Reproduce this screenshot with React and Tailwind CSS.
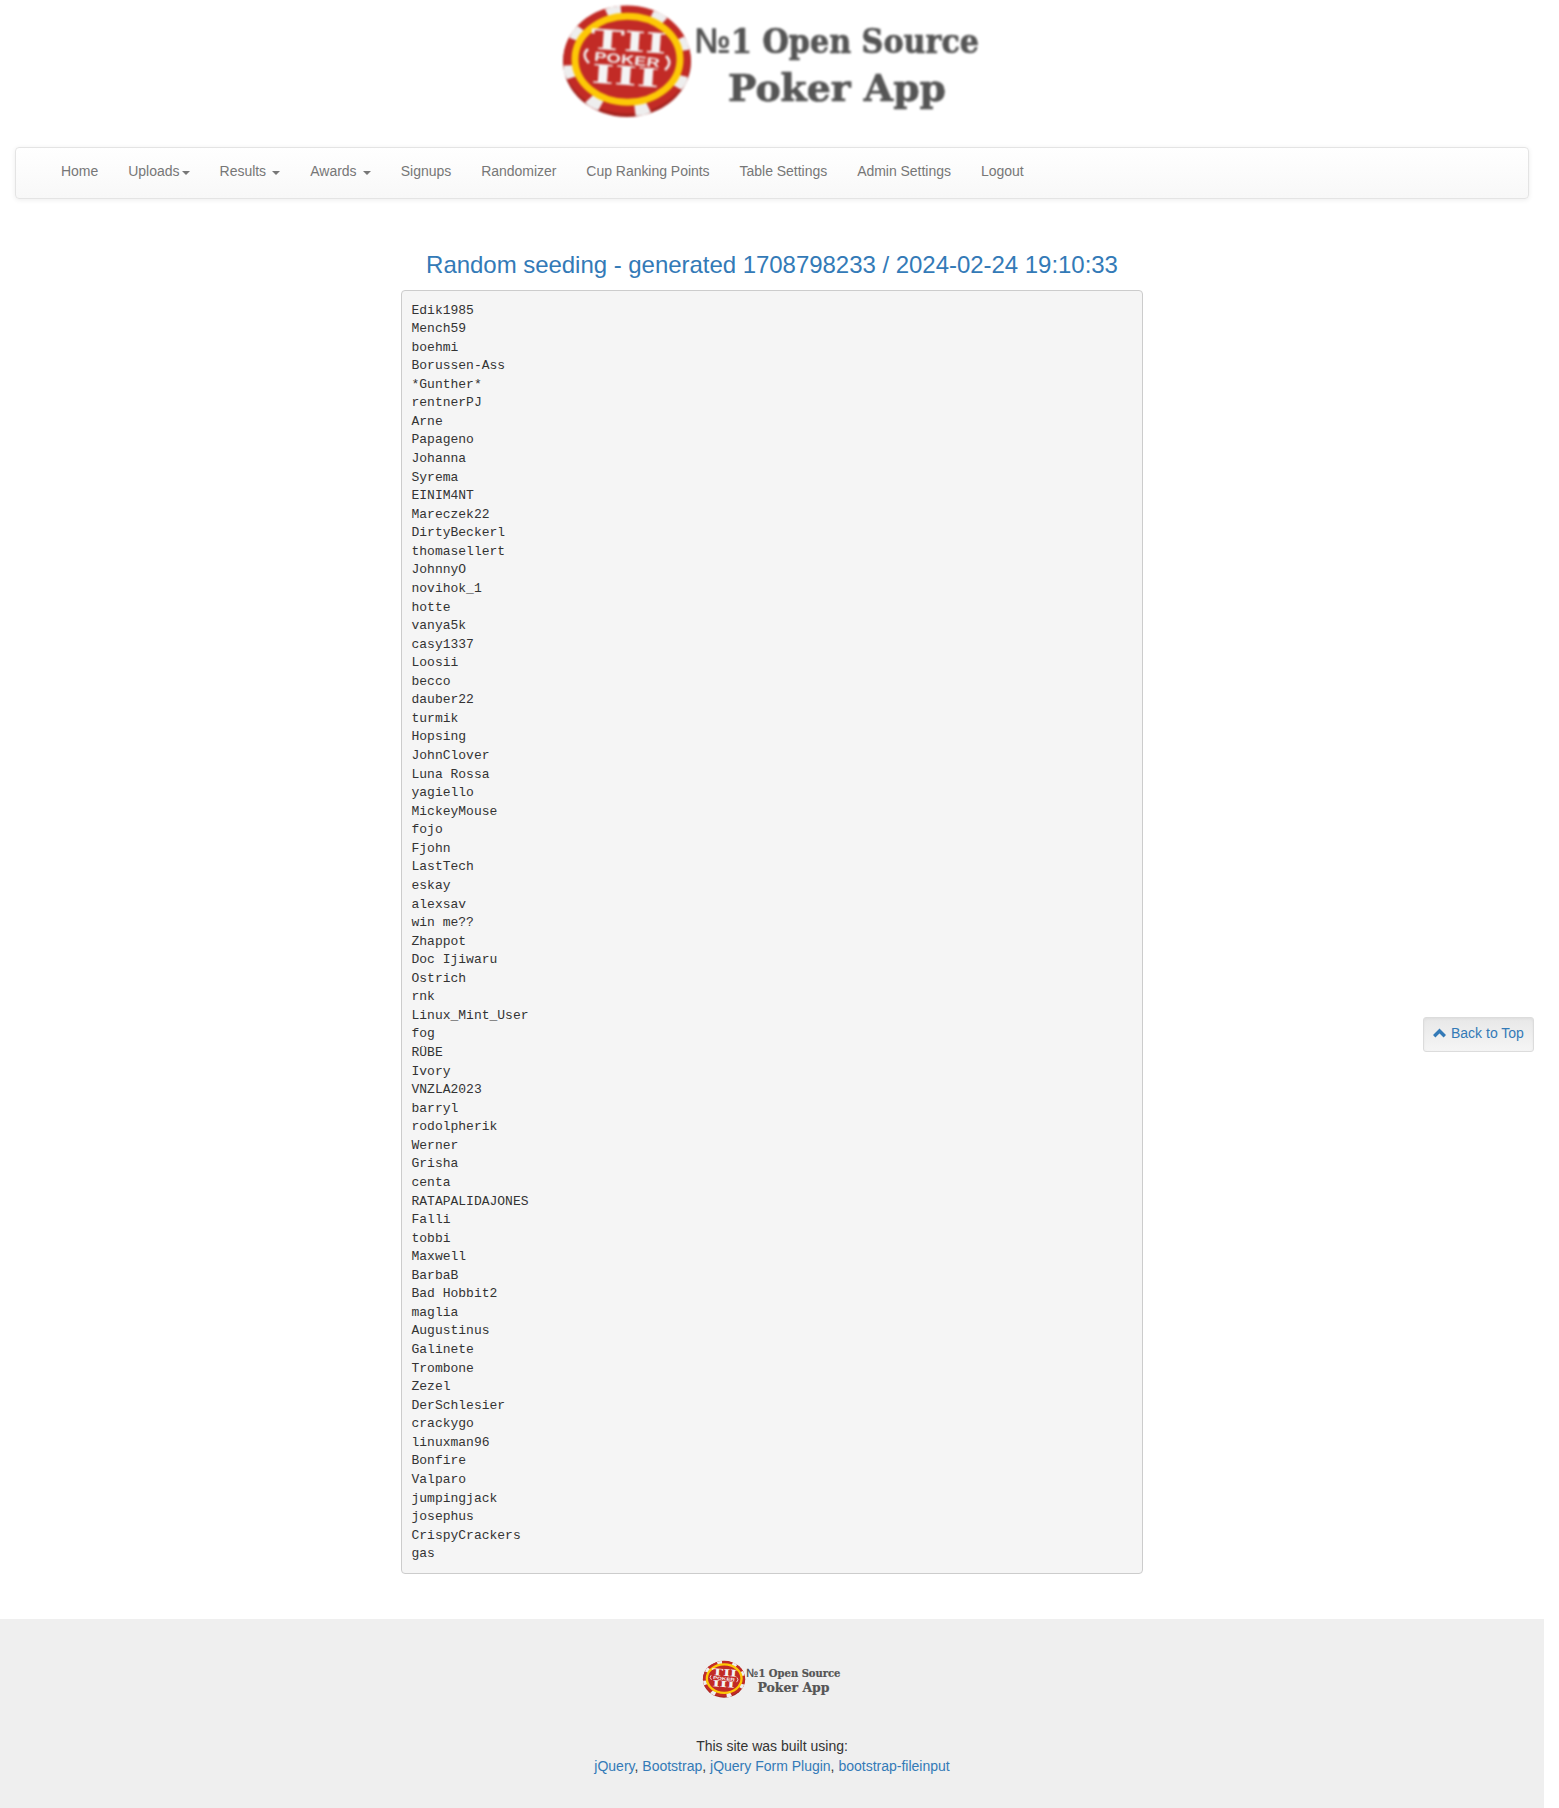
const names = `Edik1985
Mench59
boehmi
Borussen-Ass
*Gunther*
rentnerPJ
Arne
Papageno
Johanna
Syrema
EINIM4NT
Mareczek22
DirtyBeckerl
thomasellert
JohnnyO
novihok_1
hotte
vanya5k
casy1337
Loosii
becco
dauber22
turmik
Hopsing
JohnClover
Luna Rossa
yagiello
MickeyMouse
fojo
Fjohn
LastTech
eskay
alexsav
win me??
Zhappot
Doc Ijiwaru
Ostrich
rnk
Linux_Mint_User
fog
RÜBE
Ivory
VNZLA2023
barryl
rodolpherik
Werner
Grisha
centa
RATAPALIDAJONES
Falli
tobbi
Maxwell
BarbaB
Bad Hobbit2
maglia
Augustinus
Galinete
Trombone
Zezel
DerSchlesier
crackygo
linuxman96
Bonfire
Valparo
jumpingjack
josephus
CrispyCrackers
gas`;

const navItems = [
  { label: "Home" },
  { label: "Uploads", caret: "tight" },
  { label: "Results", caret: "spaced" },
  { label: "Awards", caret: "spaced" },
  { label: "Signups" },
  { label: "Randomizer" },
  { label: "Cup Ranking Points" },
  { label: "Table Settings" },
  { label: "Admin Settings" },
  { label: "Logout" },
];

const credits = ["jQuery", "Bootstrap", "jQuery Form Plugin", "bootstrap-fileinput"];

// Angles, in degrees clockwise from the top, of the white edge spots on the chip.
const spots = [-13, 32, 71, 114, 165, 214, 258, 302];

function Logo({ className }) {
  return (
    <svg viewBox="0 0 444 130" className={className} overflow="visible">
      <ellipse cx="77" cy="61.5" rx="64" ry="55.5" fill="#a3231f" />
      <ellipse cx="77" cy="59.5" rx="63.5" ry="54" fill="#c22b26" />
      <g transform="translate(77 61) scale(1 0.87)">
        {spots.map((a) => (
          <path key={a} d="M-8 -63 Q0 -65.5 8 -63 L6 -50 L-6 -50 Z" fill="#eeeeee" transform={`rotate(${a})`} />
        ))}
      </g>
      <ellipse cx="77.5" cy="59.2" rx="52.5" ry="43" fill="#c22b26" stroke="#fdc806" strokeWidth="7" />
      <g fill="#f4f4f4" fontFamily="DejaVu Serif" fontWeight="bold">
        <text x="40" y="51" fontSize="28" textLength="76" lengthAdjust="spacingAndGlyphs" transform="rotate(4 77 50)">TII</text>
        <text x="41" y="85" fontSize="26" textLength="68" lengthAdjust="spacingAndGlyphs" transform="rotate(4 77 85)">III</text>
      </g>
      <text x="44" y="64" fontFamily="Liberation Sans" fontWeight="bold" fontSize="13" fill="#f4f4f4" stroke="#c22b26" strokeWidth="3" paintOrder="stroke" textLength="66" lengthAdjust="spacingAndGlyphs" transform="rotate(6 77 60)">POKER</text>
      <path d="M38 49 q-7 6 1 14 M116 56 q7 7 -1 14" fill="none" stroke="#f4f4f4" strokeWidth="2.5" />
      <g fill="#555555" fontWeight="bold">
        <text x="144.5" y="53" fontFamily="Liberation Sans" fontSize="36" textLength="36" lengthAdjust="spacingAndGlyphs">№</text>
        <g fontFamily="DejaVu Serif" stroke="#555555" strokeWidth="0.7">
          <text x="181" y="53" fontSize="34" textLength="248" lengthAdjust="spacingAndGlyphs">1 Open Source</text>
          <text x="178" y="101" fontSize="38" textLength="218" lengthAdjust="spacingAndGlyphs">Poker App</text>
        </g>
      </g>
    </svg>
  );
}

export default function App() {
  return (
    <div className="relative flex h-[1808px] w-[1544px] flex-col font-['Helvetica_Neue',Helvetica,'Liberation_Sans',sans-serif] text-[14px] leading-5 text-[#333]">
      <header className="flex h-[147px] justify-center">
        <Logo className="h-[130px] w-[444px] blur-[0.8px]" />
      </header>

      <nav className="mx-[15px] h-[52px] rounded border border-[#e4e4e4] bg-gradient-to-b from-white to-[#f8f8f8] px-[30px] shadow-[0_1px_5px_rgba(0,0,0,0.075)]">
        <ul className="flex tracking-[-0.028px]">
          {navItems.map((item) => (
            <li key={item.label} className="flex items-center whitespace-nowrap px-[15px] py-[13px] text-[#777]">
              {item.label}
              {item.caret === "spaced" && <span className="w-1" />}
              {item.caret && (
                <span className="mt-1 ml-[2.2px] border-x-4 border-t-4 border-x-transparent border-t-[#777]" />
              )}
            </li>
          ))}
        </ul>
      </nav>

      <main className="mt-[53px] flex h-[1322.4px] flex-col items-center">
        <h3 className="mb-[12px] text-[24px] leading-[26.4px] tracking-[-0.035px] text-[#337ab7]">
          Random seeding - generated 1708798233 / 2024-02-24 19:10:33
        </h3>
        <pre className="h-[1284px] w-[742px] rounded border border-[#ccc] bg-[#f5f5f5] px-[9.5px] pt-[10.1px] font-['Liberation_Mono',monospace] text-[13px] leading-[18.5625px]">
          {names}
        </pre>
      </main>

      <footer className="mt-[44.6px] flex flex-1 flex-col items-center bg-[#efefef]">
        <Logo className="mt-[40px] h-[43px] w-[148px]" />
        <p className="mt-[34px]">This site was built using:</p>
        <p>
          {credits.map((name, i) => (
            <span key={name}>
              {i > 0 && ", "}
              <a className="text-[#337ab7]">{name}</a>
            </span>
          ))}
        </p>
      </footer>

      <a className="absolute left-[1423px] top-[1017px] flex h-[35px] w-[111px] items-start rounded-[3px] border border-[#dcdcdc] bg-gradient-to-b from-[#e8e8e8] to-[#f5f5f5] px-[9px] pt-[5px] whitespace-nowrap text-[#337ab7] shadow-[inset_0_1px_3px_rgba(0,0,0,0.05),0_1px_0_rgba(255,255,255,0.1)]">
        <svg viewBox="0 0 14 14" className="mr-1 mt-[3px] size-[14px] shrink-0">
          <path d="M1.2 10.2 L6.5 5 L11.8 10.2" fill="none" stroke="currentColor" strokeWidth="3.4" />
        </svg>
        Back to Top
      </a>
    </div>
  );
}
